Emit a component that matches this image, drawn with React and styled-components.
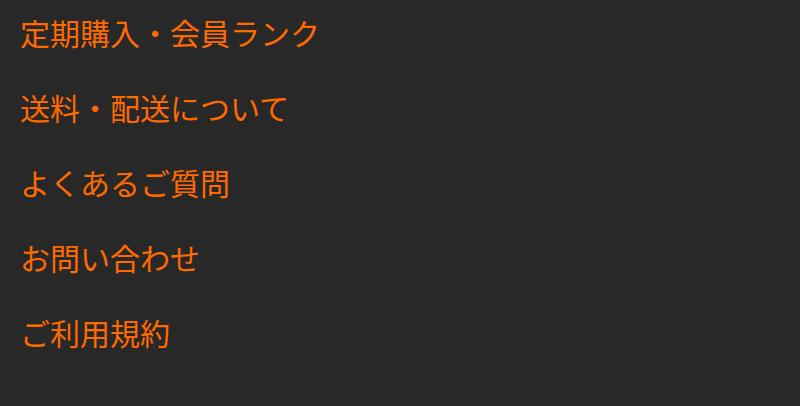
import React from 'react';
import styled, { createGlobalStyle } from 'styled-components';

const GlobalStyle = createGlobalStyle`
  html, body {
    margin: 0;
    padding: 0;
    background-color: #282828;
  }
`;

const Page = styled.div`
  min-height: 406px;
  background-color: #282828;
  box-sizing: border-box;
  padding: 10px 20px;
`;

const MenuList = styled.ul`
  list-style: none;
  margin: 0;
  padding: 0;
  display: flex;
  flex-direction: column;
  gap: 30px;
`;

const MenuLink = styled.a`
  display: block;
  color: #ff6a00;
  font-family: "Noto Sans CJK JP", "Noto Sans", sans-serif;
  font-size: 30px;
  line-height: 45px;
  text-decoration: none;
  white-space: nowrap;
`;

const items = [
  '定期購入・会員ランク',
  '送料・配送について',
  'よくあるご質問',
  'お問い合わせ',
  'ご利用規約',
];

export default function App() {
  return (
    <Page>
      <GlobalStyle />
      <MenuList>
        {items.map((label) => (
          <li key={label}>
            <MenuLink href="#">{label}</MenuLink>
          </li>
        ))}
      </MenuList>
    </Page>
  );
}
